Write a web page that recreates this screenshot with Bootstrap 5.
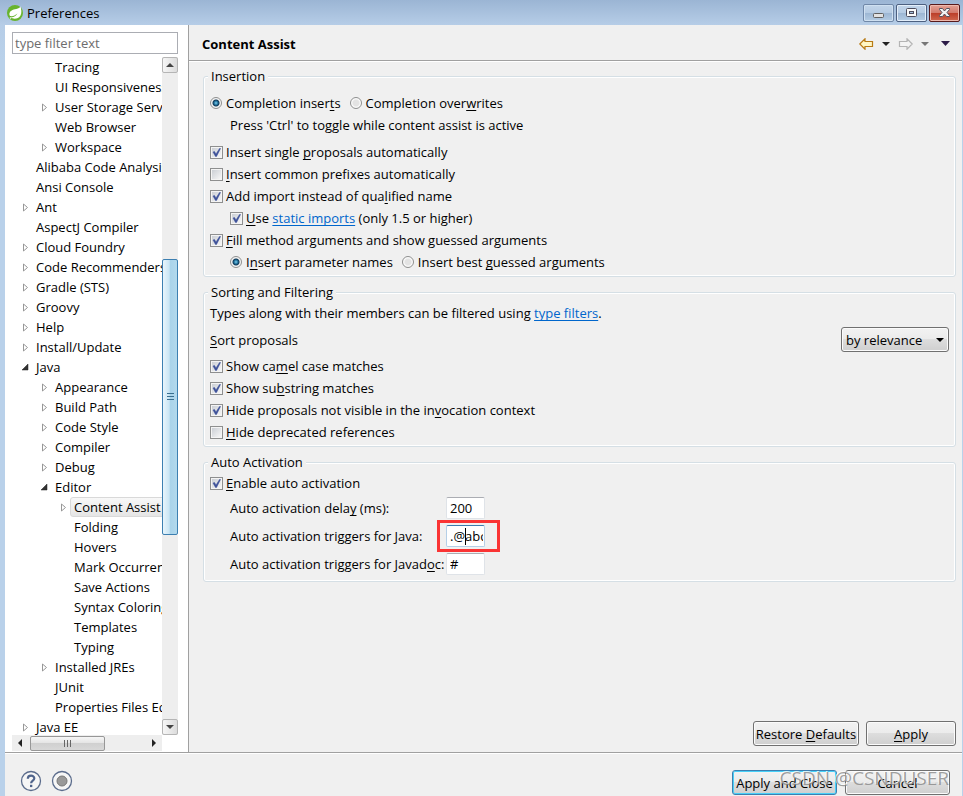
<!DOCTYPE html>
<html lang="en">
<head>
<meta charset="utf-8">
<meta name="viewport" content="width=device-width, initial-scale=1">
<title>Preferences</title>
<link href="https://cdn.jsdelivr.net/npm/bootstrap@5.3.0/dist/css/bootstrap.min.css" rel="stylesheet">
<style>
body{font-family:"Open Sans","Noto Sans",sans-serif;font-size:13px;line-height:20px;color:#000;background:#b9d1ea}
.win{height:100vh;padding:0 1px 0 5px;overflow:hidden;background:linear-gradient(#9bb5d4 0,#b6cde7 25px,#b9d1ea 60px)}
.titlebar{height:25px;padding:1px 2px 0 2px}
.wbtns{display:flex;gap:2px}
.midrow{min-height:0}
.wbtn{width:31px;height:18px;padding:0;border:1px solid #7088a8;border-radius:2px;background:linear-gradient(#c2d5ea 0,#b5cbe3 50%,#9cb6d3 50%,#b4cce4);box-shadow:inset 0 0 0 1px #cfe0f1;line-height:0}
.wbtn-max{border-color:#4c6080;box-shadow:inset 0 0 0 1px #e3eefa}
.wbtn-close{border-color:#571a1c;background:linear-gradient(#e3a195 0,#d2786a 50%,#bb3d28 50%,#d0684f);box-shadow:inset 0 0 0 1px #eeb9ae}
.side{width:184px;background:#fff;border-right:1px solid #a0a0a0;padding:7px 10px 1px 7px}
.filter{height:22px;border:1px solid #abadb3;border-radius:0;padding:0 2px;color:#6d6d6d;width:100%;line-height:20px}
.filter::placeholder{color:#6d6d6d}
.treebox{margin-top:3px;overflow:hidden}
.tree{list-style:none;margin:0;padding:0;overflow:hidden;width:150px}
.tree li{display:flex;align-items:center;height:20px;white-space:nowrap;flex:none}
.tree .tw{width:24px;padding-left:10px;flex:none;line-height:0}
.lv2{padding-left:19px}
.lv3{padding-left:38px}
.picked{margin-left:-4px;padding:0 3px;border:1px solid #d9d9d9;border-radius:3px;background:linear-gradient(#f8f8f8,#e5e5e5);line-height:18px}
.vbar{width:16px;background:#eee;flex:none}
.gap-top{flex:186}
.gap-bottom{flex:184}
.sbtn{border:1px solid #b5b5b5;border-radius:2px;background:linear-gradient(90deg,#f6f6f6,#dcdcdc);padding:0;line-height:0;height:16px;width:16px}
.vthumb{flex:273;border:1px solid #3c7fb1;border-radius:2px;background:linear-gradient(90deg,#e8f5fc,#c9e5f4 45%,#a9d3ea 50%,#b2d9ed)}
.hbar{height:16px;width:150px;background:#eee}
.hthumb{width:75px;height:15px;margin-left:2px;border:1px solid #979797;border-radius:2px;background:linear-gradient(#f6f6f6,#e3e3e3 50%,#d0d0d0 50%,#d8d8d8);line-height:0}
.abtn{border:0;background:none;padding:0;width:16px;line-height:0}
.pane{background:#f0f0f0;min-width:0}
.phead{height:36px;border-bottom:1px solid #a0a0a0;box-shadow:0 1px #fff;padding:2px 12px 0 13px}
.phead h1{font-size:13px;line-height:20px}
.tool{border:0;background:none;padding:0;line-height:0}
.pbody{padding:5px 6px 6px 14px}
fieldset.grp{border:1px solid #d5dfe5;border-radius:3px;box-shadow:inset 0 0 0 1px #fff;padding:0 6px 3px;margin-bottom:5px}
.grp legend{float:none;width:auto;font-size:13px;line-height:20px;margin:0 0 0 -2px;padding:0 3px;background:#f0f0f0}
.opt{display:flex;align-items:center;height:22px;white-space:nowrap}
.opt label{padding-left:3px}
.opt .rad + label{padding-left:4px}
.first{margin-top:6px}
.hint{margin-bottom:5px}
.opt label + .rad{margin-left:9px}
.sortrow{margin:3px 0}
.sub{padding-left:20px}
u{text-underline-offset:2px;text-decoration-thickness:1px;text-decoration-skip-ink:none}
.opt a{color:#06c;text-decoration-thickness:1px;text-underline-offset:2px;text-decoration-skip-ink:none}
.tick{appearance:none;margin:0;width:13px;height:13px;flex:none;border:1px solid #8e8f8f;background:linear-gradient(135deg,#cbcfd5,#f6f6f6) content-box,#f4f4f4;padding:1px}
.tick:checked{background:url("data:image/svg+xml,%3Csvg xmlns='http://www.w3.org/2000/svg' viewBox='0 0 11 11'%3E%3Cpath d='M2 5l1.500-.5L5 7 8.500 1.500h1L5.500 9.500h-1z' fill='%233d5199' stroke='%233d5199' stroke-width='.5'/%3E%3C/svg%3E") center/11px,linear-gradient(135deg,#cbcfd5,#f6f6f6) content-box,#f4f4f4}
.rad{appearance:none;margin:0;width:12px;height:12px;flex:none;border:1px solid #8e8f8f;border-radius:50%;background:radial-gradient(circle,#e3e3e3 40%,#fafafa 60%)}
.rad:checked{background:radial-gradient(circle at 5px 5px,#7fd0f0 0,#1b6a95 2px,#143a58 3px,#f4f4f4 4px)}
.pick{appearance:none;height:25px;width:108px;border:1px solid #707070;border-radius:3px;padding:0 4px;color:#000;box-shadow:inset 0 0 0 1px #fbfbfb;background:url("data:image/svg+xml,%3Csvg xmlns='http://www.w3.org/2000/svg' viewBox='0 0 8 4'%3E%3Cpath d='M0 0h8L4 4z'/%3E%3C/svg%3E") right 4px center/8px 4px no-repeat,linear-gradient(#f2f2f2,#ebebeb 50%,#ddd 50%,#cfcfcf)}
.fields{display:grid;grid-template-columns:216px 39px;row-gap:6px;padding:3px 0 3px 20px}
.fields label{line-height:22px;white-space:nowrap}
.fields input{display:block;width:39px;height:22px;border:1px solid #dfe3e8;border-top-color:#abadb3;border-radius:2px;padding:0 1px 0 3px;line-height:20px;background:#fff;outline:0}
.fields .hot{border-color:#b5cfe7;border-top-color:#3d7bad}
.ring{position:absolute;inset:-5px -15px -5px -9px;border:3px solid #fa3434;pointer-events:none}
.caret{position:absolute;left:19px;top:3px;width:1px;height:17px;background:#000}
.pair{display:flex;justify-content:flex-end;gap:7px}
.push{height:25px;border:1px solid #707070;border-radius:3px;padding:0;line-height:22px;font-size:13px;color:#000;background:linear-gradient(#f2f2f2,#ebebeb 50%,#ddd 50%,#cfcfcf);box-shadow:inset 0 0 0 1px #fbfbfb;white-space:nowrap}
.push-def{border-color:#3c7fb1;box-shadow:inset 0 0 0 1px #48d0f8}
.w90{width:90px}.w105{width:105px}.w106{width:106px}
.foot{height:44px;flex:none;background:#f0f0f0;border-top:1px solid #a0a0a0;box-shadow:inset 0 1px #fff;padding:17px 12px 0 15px}
.icons{display:flex;gap:9px}
.stamp{position:absolute;right:1px;top:-4px;font-size:19px;line-height:24px;white-space:nowrap;color:rgba(130,130,130,.75);text-shadow:-1px -1px rgba(255,255,255,.8);pointer-events:none}
</style>
<script src="https://cdn.jsdelivr.net/npm/bootstrap@5.3.0/dist/js/bootstrap.bundle.min.js"></script>
</head>
<body>
<svg class="d-none" xmlns="http://www.w3.org/2000/svg">
<symbol id="c" viewBox="0 0 7 9"><path d="M1.500 1v7L5.500 4.500z" fill="#fff" stroke="#989898"/></symbol>
<symbol id="o" viewBox="0 0 7 9"><path d="M6 1v6H0z" fill="#333" stroke="#222" stroke-width=".5"/></symbol>
</svg>
<div class="win d-flex flex-column">
<header class="titlebar d-flex align-items-center flex-shrink-0">
<svg width="16" height="16" viewBox="0 0 16 16"><circle cx="8" cy="8" r="8" fill="#68b42e"/><path d="M13.500 1.500C12 4 9 3.500 5.500 5 2 6.500 2 9.500 3 11c3 .5 5-.5 7.500-2.500-2 3-5 4-7 4 3 2 8 1.500 10-2 1.500-3 .8-6 0-9z" fill="#fff"/><circle cx="3.500" cy="13" r=".8" fill="#fff"/></svg>
<span class="ps-1 flex-grow-1">Preferences</span>
<div class="wbtns">
<button class="wbtn" aria-label="Minimize"><svg width="13" height="12"><rect x="1.500" y="6.500" width="10" height="4" rx="1" fill="#e2e2e2" stroke="#606060"/></svg></button>
<button class="wbtn wbtn-max" aria-label="Maximize"><svg width="13" height="12"><rect x="1.500" y="1.500" width="10" height="8" rx="1" fill="#fafafa" stroke="#4c4c5c"/><rect x="4.500" y="4.500" width="4" height="2" fill="#a5bfdb" stroke="#4c4c5c"/></svg></button>
<button class="wbtn wbtn-close" aria-label="Close"><svg width="13" height="12"><path d="M1.500 1.500h3l2 2.500 2-2.500h3v1L9 5.500l2.500 3v1h-3l-2-2.500-2 2.500h-3v-1L4 5.500l-2.500-3z" fill="#f4f4f4" stroke="#53535f"/></svg></button>
</div>
</header>
<div class="midrow d-flex flex-grow-1">
<aside class="side d-flex flex-column flex-shrink-0">
<input class="filter flex-shrink-0" type="text" placeholder="type filter text" aria-label="Filter">
<div class="treebox d-flex flex-grow-1">
<ul class="tree">
<li class="lv2"><span class="tw"></span>Tracing</li>
<li class="lv2"><span class="tw"></span>UI Responsiveness</li>
<li class="lv2"><span class="tw"><svg width="7" height="9"><use href="#c"/></svg></span>User Storage Service</li>
<li class="lv2"><span class="tw"></span>Web Browser</li>
<li class="lv2"><span class="tw"><svg width="7" height="9"><use href="#c"/></svg></span>Workspace</li>
<li><span class="tw"></span>Alibaba Code Analysis</li>
<li><span class="tw"></span>Ansi Console</li>
<li><span class="tw"><svg width="7" height="9"><use href="#c"/></svg></span>Ant</li>
<li><span class="tw"></span>AspectJ Compiler</li>
<li><span class="tw"><svg width="7" height="9"><use href="#c"/></svg></span>Cloud Foundry</li>
<li><span class="tw"><svg width="7" height="9"><use href="#c"/></svg></span>Code Recommenders</li>
<li><span class="tw"><svg width="7" height="9"><use href="#c"/></svg></span>Gradle (STS)</li>
<li><span class="tw"><svg width="7" height="9"><use href="#c"/></svg></span>Groovy</li>
<li><span class="tw"><svg width="7" height="9"><use href="#c"/></svg></span>Help</li>
<li><span class="tw"><svg width="7" height="9"><use href="#c"/></svg></span>Install/Update</li>
<li><span class="tw"><svg width="7" height="9"><use href="#o"/></svg></span>Java</li>
<li class="lv2"><span class="tw"><svg width="7" height="9"><use href="#c"/></svg></span>Appearance</li>
<li class="lv2"><span class="tw"><svg width="7" height="9"><use href="#c"/></svg></span>Build Path</li>
<li class="lv2"><span class="tw"><svg width="7" height="9"><use href="#c"/></svg></span>Code Style</li>
<li class="lv2"><span class="tw"><svg width="7" height="9"><use href="#c"/></svg></span>Compiler</li>
<li class="lv2"><span class="tw"><svg width="7" height="9"><use href="#c"/></svg></span>Debug</li>
<li class="lv2"><span class="tw"><svg width="7" height="9"><use href="#o"/></svg></span>Editor</li>
<li class="lv3"><span class="tw"><svg width="7" height="9"><use href="#c"/></svg></span><span class="picked">Content Assist</span></li>
<li class="lv3"><span class="tw"></span>Folding</li>
<li class="lv3"><span class="tw"></span>Hovers</li>
<li class="lv3"><span class="tw"></span>Mark Occurrences</li>
<li class="lv3"><span class="tw"></span>Save Actions</li>
<li class="lv3"><span class="tw"></span>Syntax Coloring</li>
<li class="lv3"><span class="tw"></span>Templates</li>
<li class="lv3"><span class="tw"></span>Typing</li>
<li class="lv2"><span class="tw"><svg width="7" height="9"><use href="#c"/></svg></span>Installed JREs</li>
<li class="lv2"><span class="tw"></span>JUnit</li>
<li class="lv2"><span class="tw"></span>Properties Files Editor</li>
<li><span class="tw"><svg width="7" height="9"><use href="#c"/></svg></span>Java EE</li>
</ul>
<div class="vbar d-flex flex-column">
<button class="sbtn" aria-label="Scroll up"><svg width="8" height="4"><path d="M0 4l4-4 4 4z" fill="#444"/></svg></button>
<div class="gap-top"></div>
<div class="vthumb d-flex align-items-center justify-content-center"><svg width="7" height="8"><path d="M0 .5h7M0 3.500h7M0 6.500h7" stroke="#3a6f8f"/></svg></div>
<div class="gap-bottom"></div>
<button class="sbtn" aria-label="Scroll down"><svg width="8" height="4"><path d="M0 0l4 4 4-4z" fill="#444"/></svg></button>
</div>
</div>
<div class="hbar d-flex align-items-center flex-shrink-0">
<button class="abtn" aria-label="Scroll left"><svg width="4" height="8"><path d="M4 0L0 4l4 4z" fill="#222"/></svg></button>
<div class="hthumb me-auto d-flex align-items-center justify-content-center"><svg width="8" height="7"><path d="M.5 0v7M3.500 0v7M6.500 0v7" stroke="#666"/></svg></div>
<button class="abtn" aria-label="Scroll right"><svg width="4" height="8"><path d="M0 0l4 4-4 4z" fill="#222"/></svg></button>
</div>
</aside>
<main class="pane d-flex flex-column flex-grow-1">
<div class="phead d-flex align-items-center flex-shrink-0">
<h1 class="fw-bold m-0 me-auto">Content Assist</h1>
<div class="d-flex align-items-center gap-2">
<button class="tool" aria-label="Back"><svg width="15" height="12"><path d="M.8 6L6 .8v2.700h7.500v5H6v2.700z" fill="#fff6c4" stroke="#b87a14" stroke-width="1.200"/></svg></button>
<button class="tool" aria-label="Back history"><svg width="8" height="4"><path d="M0 0h8L4 4z" fill="#222"/></svg></button>
<button class="tool" aria-label="Forward"><svg width="15" height="12"><path d="M14.200 6L9 .8v2.700H1.500v5H9v2.700z" fill="#f4f4f4" stroke="#b4b4b4" stroke-width="1.200"/></svg></button>
<button class="tool" aria-label="Forward history"><svg width="8" height="4"><path d="M0 0h8L4 4z" fill="#777"/></svg></button>
<button class="tool ps-1" aria-label="Menu"><svg width="9" height="5"><path d="M0 0h9L4.500 5z" fill="#2d1c48"/></svg></button>
</div>
</div>
<div class="pbody flex-grow-1 d-flex flex-column">
<fieldset class="grp">
<legend>Insertion</legend>
<div class="opt first"><input class="rad" type="radio" name="m" id="r1" checked><label for="r1">Completion inser<u>t</u>s</label><input class="rad" type="radio" name="m" id="r2"><label for="r2">Completion over<u>w</u>rites</label></div>
<div class="opt sub hint">Press 'Ctrl' to toggle while content assist is active</div>
<div class="opt"><input class="tick" type="checkbox" id="k1" checked><label for="k1">Insert single <u>p</u>roposals automatically</label></div>
<div class="opt"><input class="tick" type="checkbox" id="k2"><label for="k2"><u>I</u>nsert common prefixes automatically</label></div>
<div class="opt"><input class="tick" type="checkbox" id="k3" checked><label for="k3">Add import instead of qua<u>l</u>ified name</label></div>
<div class="opt sub"><input class="tick" type="checkbox" id="k4" checked><label for="k4"><u>U</u>se <a href="#">static imports</a> (only 1.5 or higher)</label></div>
<div class="opt"><input class="tick" type="checkbox" id="k5" checked><label for="k5"><u>F</u>ill method arguments and show guessed arguments</label></div>
<div class="opt sub"><input class="rad" type="radio" name="g" id="r3" checked><label for="r3">I<u>n</u>sert parameter names</label><input class="rad" type="radio" name="g" id="r4"><label for="r4">Insert best <u>g</u>uessed arguments</label></div>
</fieldset>
<fieldset class="grp">
<legend>Sorting and Filtering</legend>
<div class="opt"><span>Types along with their members can be filtered using <a href="#">type filters</a>.</span></div>
<div class="sortrow d-flex justify-content-between align-items-center"><label for="sel"><u>S</u>ort proposals</label><select class="pick" id="sel"><option>by relevance</option><option>alphabetically</option></select></div>
<div class="opt"><input class="tick" type="checkbox" id="k6" checked><label for="k6">Show ca<u>m</u>el case matches</label></div>
<div class="opt"><input class="tick" type="checkbox" id="k7" checked><label for="k7">Show su<u>b</u>string matches</label></div>
<div class="opt"><input class="tick" type="checkbox" id="k8" checked><label for="k8">Hide proposals not visible in the in<u>v</u>ocation context</label></div>
<div class="opt"><input class="tick" type="checkbox" id="k9"><label for="k9"><u>H</u>ide deprecated references</label></div>
</fieldset>
<fieldset class="grp">
<legend>Auto Activation</legend>
<div class="opt"><input class="tick" type="checkbox" id="k10" checked><label for="k10"><u>E</u>nable auto activation</label></div>
<div class="fields">
<label for="f1">Auto activation dela<u>y</u> (ms):</label><input id="f1" type="text" value="200">
<label for="f2">Auto activation triggers for Java:</label><div class="position-relative"><input class="hot" id="f2" type="text" value=".@abc"><i class="caret"></i><i class="ring"></i></div>
<label for="f3">Auto activation triggers for Javad<u>o</u>c:</label><input id="f3" type="text" value="#">
</div>
</fieldset>
<div class="pair mt-auto"><button class="push w106">Restore <u>D</u>efaults</button><button class="push w90"><u>A</u>pply</button></div>
</div>
</main>
</div>
<footer class="foot d-flex justify-content-between align-items-start">
<div class="icons">
<button class="tool" aria-label="Help"><svg width="22" height="22"><circle cx="11" cy="11" r="9.500" fill="#f6f6f6" stroke="#5b6c8c" stroke-width="1.300"/><path d="M7.800 8.700c0-4 6.500-4 6.500-.4 0 2.400-3.200 2.300-3.200 5" fill="none" stroke="#50648c" stroke-width="2.200"/><rect x="10" y="14.800" width="2.300" height="2.300" fill="#50648c"/></svg></button>
<button class="tool" aria-label="Record"><svg width="22" height="22"><circle cx="11" cy="11" r="9.500" fill="#f6f6f6" stroke="#5b6c8c" stroke-width="1.300"/><circle cx="11" cy="11" r="5" fill="#999" stroke="#777"/></svg></button>
</div>
<div class="d-flex gap-2 position-relative"><button class="push push-def w105">Apply and Close</button><button class="push w105">Cancel</button><span class="stamp">CSDN @CSNDUSER</span></div>
</footer>
</div>
</body>
</html>
